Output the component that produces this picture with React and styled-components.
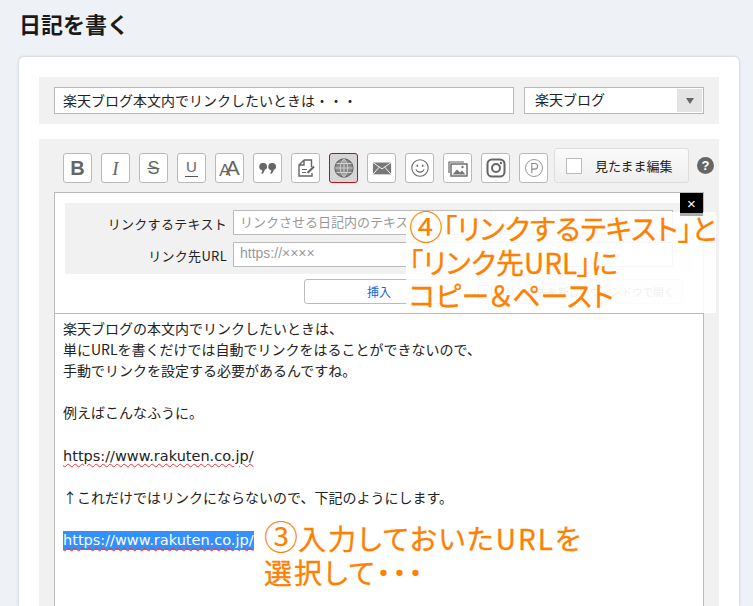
import React from 'react';
import styled, { createGlobalStyle } from 'styled-components';

const JP = `"DejaVu Sans", "Noto Sans CJK JP", sans-serif`;
const CJK = `"Noto Sans CJK JP", "Liberation Sans", sans-serif`;

const Global = createGlobalStyle`
  html, body { margin: 0; padding: 0; height: 606px; overflow: hidden; background: #eef1f5; }
  * { box-sizing: border-box; }
  body { font-family: ${CJK}; font-size: 14px; color: #222; }
`;

const Page = styled.div`
  height: 606px;
  width: 753px;
  padding: 0 14px 0 19px;
  overflow: hidden;
  display: flex;
  flex-direction: column;
`;
const Title = styled.h1`
  margin: 0;
  height: 57px;
  padding-top: 7px;
  font-size: 22px;
  line-height: 32px;
  font-weight: 700;
  color: #1a1a1a;
`;
const Card = styled.main`
  flex: 1;
  min-height: 0;
  background: #fff;
  border-radius: 5px 5px 0 0;
  box-shadow: 0 0 3px rgba(0, 0, 0, 0.22);
  padding: 20px 20px 0;
  display: flex;
  flex-direction: column;
  gap: 15px;
  position: relative;
`;
const HeadBand = styled.section`
  background: #f1f1f1;
  height: 47px;
  flex: none;
  padding: 10px 15px;
  display: flex;
  gap: 10px;
`;
const TitleInput = styled.input`
  width: 460px;
  height: 27px;
  border: 1px solid #b8b8b8;
  background: #fff;
  padding: 0 8px 2px;
  font: 14px ${CJK};
  color: #222;
  outline: none;
`;
const Select = styled.div`
  width: 180px;
  height: 27px;
  border: 1px solid #b8b8b8;
  background: #fff;
  padding: 0 1px 0 10px;
  display: flex;
  align-items: center;
  justify-content: space-between;
  font-size: 14px;
`;
const SelectText = styled.span`
  padding-bottom: 3px;
`;
const Arrow = styled.span`
  width: 25px;
  height: 23px;
  background: #e4e4e4;
  display: flex;
  align-items: center;
  justify-content: center;
  &::after {
    content: '';
    border-style: solid;
    border-width: 6px 4px 0;
    border-color: #666 transparent transparent;
  }
`;
const EditorBand = styled.section`
  flex: 1;
  min-height: 0;
  background: #f1f1f1;
  padding: 9px 15px 0;
  display: flex;
  flex-direction: column;
`;
const Toolbar = styled.div`
  height: 35px;
  flex: none;
  padding-left: 9px;
  display: flex;
  align-items: flex-end;
  gap: 9px;
`;
const ToolButton = styled.button`
  width: 29px;
  height: 30px;
  flex: none;
  padding: 0;
  border: 1px solid ${p => (p.$active ? '#b5131b' : '#b9b9b9')};
  border-radius: 3px;
  background: ${p => (p.$active ? '#d6d6d6' : '#fff')};
  color: #666;
  display: flex;
  align-items: center;
  justify-content: center;
  font-family: "Liberation Sans", sans-serif;
  svg { display: block; }
`;
const LetterB = styled.span`
  font-size: 20px;
  font-weight: 700;
  line-height: 1;
`;
const LetterI = styled.span`
  font-family: "Liberation Serif", serif;
  font-size: 19px;
  font-style: italic;
  line-height: 1;
`;
const LetterS = styled.span`
  font-size: 18px;
  line-height: 1;
  text-decoration: line-through;
  text-decoration-thickness: 1px;
  padding: 0 4px;
`;
const LetterU = styled.span`
  font-size: 15px;
  line-height: 1;
  padding: 0 1px 2px;
  border-bottom: 1px solid #555;
`;
const LetterA = styled.span`
  font-size: ${p => p.$size}px;
  line-height: 1;
  margin-left: ${p => p.$shift || 0}px;
  margin-top: ${p => p.$top || 0}px;
`;
const WysiwygButton = styled.button`
  width: 135px;
  height: 35px;
  flex: none;
  margin-left: -3px;
  padding: 0 0 0 11px;
  border: 1px solid #ddd;
  border-radius: 3px;
  background: linear-gradient(#fafafa, #efefef);
  display: flex;
  align-items: center;
  gap: 13px;
  font: 13px ${CJK};
  color: #222;
`;
const Square = styled.span`
  width: 16px;
  height: 16px;
  background: #fff;
  border: 1px solid #bbb;
`;
const Help = styled.span`
  width: 17px;
  height: 17px;
  flex: none;
  margin: 0 0 9px -1px;
  border-radius: 50%;
  background: #666;
  color: #fff;
  font: 700 13px/17px "Liberation Sans", sans-serif;
  text-align: center;
`;
const LinkBox = styled.div`
  margin-top: 9px;
  height: 122px;
  flex: none;
  border: 1px solid #bbb;
  background: #fff;
  padding: 10px 10px 0;
  position: relative;
`;
const LinkForm = styled.div`
  width: 628px;
  height: 71px;
  background: #f1f1f1;
  padding: 7px 0 0;
  display: flex;
  flex-direction: column;
  gap: 8px;
`;
const LinkRow = styled.label`
  display: flex;
  align-items: center;
  gap: 6px;
  height: 24px;
`;
const LinkLabel = styled.span`
  width: 162px;
  text-align: right;
  font-size: 13px;
  letter-spacing: 0.3px;
  padding-top: 3px;
`;
const LinkInput = styled.input`
  width: 440px;
  height: 25px;
  border: 1px solid #bbb;
  background: #fff;
  padding: 0 6px 2px;
  font: ${p => (p.$latin ? '14px "Liberation Sans", sans-serif' : `13px ${CJK}`)};
  outline: none;
  &::placeholder { color: #999; opacity: 1; }
`;
const LinkActions = styled.div`
  margin-top: 5px;
  padding-left: 239px;
  display: flex;
  gap: 12px;
`;
const InsertButton = styled.button`
  width: 150px;
  height: 25px;
  border: 1px solid #bbb;
  border-radius: 3px;
  background: #fff;
  color: #1a5fe0;
  font: 12px ${CJK};
`;
const NewWindow = styled.div`
  width: 217px;
  height: 25px;
  border: 1px solid #ddd;
  border-radius: 3px;
  background: #f4f4f4;
  color: #777;
  font-size: 10.6px;
  white-space: nowrap;
  display: flex;
  align-items: center;
  gap: 13px;
  padding-left: 11px;
`;
const SmallSquare = styled.span`
  width: 14px;
  height: 14px;
  flex: none;
  background: #fff;
  border: 1px solid #aaa;
`;
const CloseButton = styled.button`
  position: absolute;
  top: 0;
  right: 0;
  z-index: 1;
  width: 23px;
  height: 23px;
  padding: 0;
  border: 0;
  border-bottom: 3px solid #aaa;
  background: #000;
  color: #fff;
  font: 15px/1 "Liberation Sans", sans-serif;
`;
const Editor = styled.div`
  flex: 1;
  width: 650px;
  min-height: 0;
  margin-top: -1px;
  border: 1px solid #bbb;
  border-bottom: 0;
  background: #fff;
  padding: 4px 8px 0;
  font-size: 14px;
  line-height: 21.1px;
  color: #222;
  font-family: ${CJK};
`;
const Line = styled.div`
  height: 21.1px;
`;
const Url = styled.span`
  font-family: ${JP};
  font-size: 14.5px;
  line-height: 1;
  text-decoration: underline wavy #e33;
  text-decoration-thickness: 1px;
  text-underline-offset: 2px;
  ${p => p.$selected && 'background: #3390ff; color: #fff; padding: 1px 0 2px;'}
`;
const Note = styled.div`
  position: absolute;
  left: ${p => p.$left}px;
  top: ${p => p.$top}px;
  width: ${p => p.$width}px;
  padding: ${p => p.$pad || '0'};
  font-size: 28px;
  font-feature-settings: "palt";
  letter-spacing: ${p => p.$spacing || 0}px;
  line-height: 33.5px;
  color: #ff8000;
  background: ${p => (p.$wash ? 'rgba(255,255,255,0.88)' : 'transparent')};
  white-space: nowrap;
  -webkit-text-stroke: 0.3px #ff8000;
`;
const Circled = styled.span`
  font-size: 34px;
  line-height: 0;
  letter-spacing: 0;
  -webkit-text-stroke: 0;
`;

const Icon = ({ children, size = 22 }) => (
  <svg width={size} height={size} viewBox="0 0 22 22" fill="none" stroke="#666" strokeWidth="1.4">{children}</svg>
);

export default function App() {
  return (
    <Page>
      <Global />
      <Title>日記を書く</Title>
      <Card>
        <HeadBand>
          <TitleInput readOnly value="楽天ブログ本文内でリンクしたいときは・・・" />
          <Select><SelectText>楽天ブログ</SelectText><Arrow /></Select>
        </HeadBand>
        <EditorBand>
          <Toolbar>
            <ToolButton><LetterB>B</LetterB></ToolButton>
            <ToolButton><LetterI>I</LetterI></ToolButton>
            <ToolButton><LetterS>S</LetterS></ToolButton>
            <ToolButton><LetterU>U</LetterU></ToolButton>
            <ToolButton><LetterA $size={17} $top={5}>A</LetterA><LetterA $size={21} $shift={-5} $top={-1}>A</LetterA></ToolButton>
            <ToolButton>
              <Icon><path fill="#666" stroke="none" d="M6.500 6a3.500 3.500 0 0 1 1.200 6.800c-.2 1.700-1 3-2.500 4.200l-1-.8c.8-1 1.100-1.800 1.100-3A3.500 3.500 0 0 1 6.500 6zM15.500 6a3.500 3.500 0 0 1 1.200 6.800c-.2 1.700-1 3-2.500 4.200l-1-.8c.8-1 1.100-1.800 1.100-3A3.500 3.500 0 0 1 15.500 6z" /></Icon>
            </ToolButton>
            <ToolButton>
              <Icon>
                <path d="M9 3h7.500v7M9 3 4 8v11h13v-3M9 3v5H4" />
                <path d="M7 12.500h5M7 15.500h4" strokeWidth="1.100" />
                <path strokeWidth="2.200" d="M12.500 16l6.500-6.500" />
              </Icon>
            </ToolButton>
            <ToolButton $active>
              <Icon>
                <circle cx="11" cy="11" r="9" fill="#8a8a8a" stroke="#6c6c6c" />
                <path stroke="#d6d6d6" strokeWidth="0.900" d="M2 11h18M3.500 6.500h15M3.500 15.500h15M11 2v18M11 2c-5 5-5 13 0 18M11 2c5 5 5 13 0 18" />
              </Icon>
            </ToolButton>
            <ToolButton>
              <Icon size={20}>
                <path fill="#777" stroke="none" d="M1 5h20v13H1z" />
                <path stroke="#fff" strokeWidth="1" d="M1 5l10 7 10-7M1 18l7-8M21 18l-7-8" />
              </Icon>
            </ToolButton>
            <ToolButton>
              <Icon size={20}>
                <circle cx="11" cy="11" r="9" strokeWidth="1.200" />
                <path d="M6.500 12.500c1.500 4 7.500 4 9 0" strokeWidth="1.200" />
                <path d="M8 7.500v2M14 7.500v2" strokeWidth="1.600" />
              </Icon>
            </ToolButton>
            <ToolButton>
              <Icon>
                <path d="M2 16V5h15" strokeWidth="1.200" />
                <rect x="4" y="7" width="16" height="12" strokeWidth="1.400" />
                <path fill="#777" stroke="none" d="M5.500 17.500l4.500-5 3 3 2-2 3.500 4z" />
                <circle cx="15.500" cy="10" r="1.200" fill="#777" stroke="none" />
              </Icon>
            </ToolButton>
            <ToolButton>
              <Icon>
                <rect x="2.500" y="2.500" width="17" height="17" rx="4.500" strokeWidth="2" />
                <circle cx="11" cy="11" r="4" strokeWidth="2" />
                <circle cx="16" cy="6" r="1.200" fill="#666" stroke="none" />
              </Icon>
            </ToolButton>
            <ToolButton>
              <Icon>
                <circle cx="11" cy="11" r="8.500" stroke="#999" strokeWidth="1" />
                <path d="M8.800 16V6.500h3a2.700 2.700 0 0 1 0 5.600h-3" stroke="#888" strokeWidth="1.100" />
              </Icon>
            </ToolButton>
            <WysiwygButton><Square />見たまま編集</WysiwygButton>
            <Help>?</Help>
          </Toolbar>
          <LinkBox>
            <LinkForm>
              <LinkRow>
                <LinkLabel>リンクするテキスト</LinkLabel>
                <LinkInput readOnly placeholder="リンクさせる日記内のテキスト" />
              </LinkRow>
              <LinkRow>
                <LinkLabel>リンク先URL</LinkLabel>
                <LinkInput $latin readOnly placeholder="https://××××" />
              </LinkRow>
            </LinkForm>
            <LinkActions>
              <InsertButton>挿入</InsertButton>
              <NewWindow><SmallSquare />リンク先を新しいウィンドウで開く</NewWindow>
            </LinkActions>
            <CloseButton>×</CloseButton>
          </LinkBox>
          <Editor>
            <Line>楽天ブログの本文内でリンクしたいときは、</Line>
            <Line>単にURLを書くだけでは自動でリンクをはることができないので、</Line>
            <Line>手動でリンクを設定する必要があるんですね。</Line>
            <Line />
            <Line>例えばこんなふうに。</Line>
            <Line />
            <Line><Url>https://www.rakuten.co.jp/</Url></Line>
            <Line />
            <Line>↑これだけではリンクにならないので、下記のようにします。</Line>
            <Line />
            <Line><Url $selected>https://www.rakuten.co.jp/</Url></Line>
          </Editor>
        </EditorBand>
        <Note $wash $left={387} $top={155} $width={310} $pad="0 0 0 3px">
          <Circled>④</Circled>「リンクするテキスト」と<br />「リンク先URL」に<br />コピー＆ペースト
        </Note>
        <Note $left={245} $top={465} $width={340} $spacing={2}>
          <Circled>③</Circled>入力しておいたURLを<br />選択して・・・
        </Note>
      </Card>
    </Page>
  );
}
